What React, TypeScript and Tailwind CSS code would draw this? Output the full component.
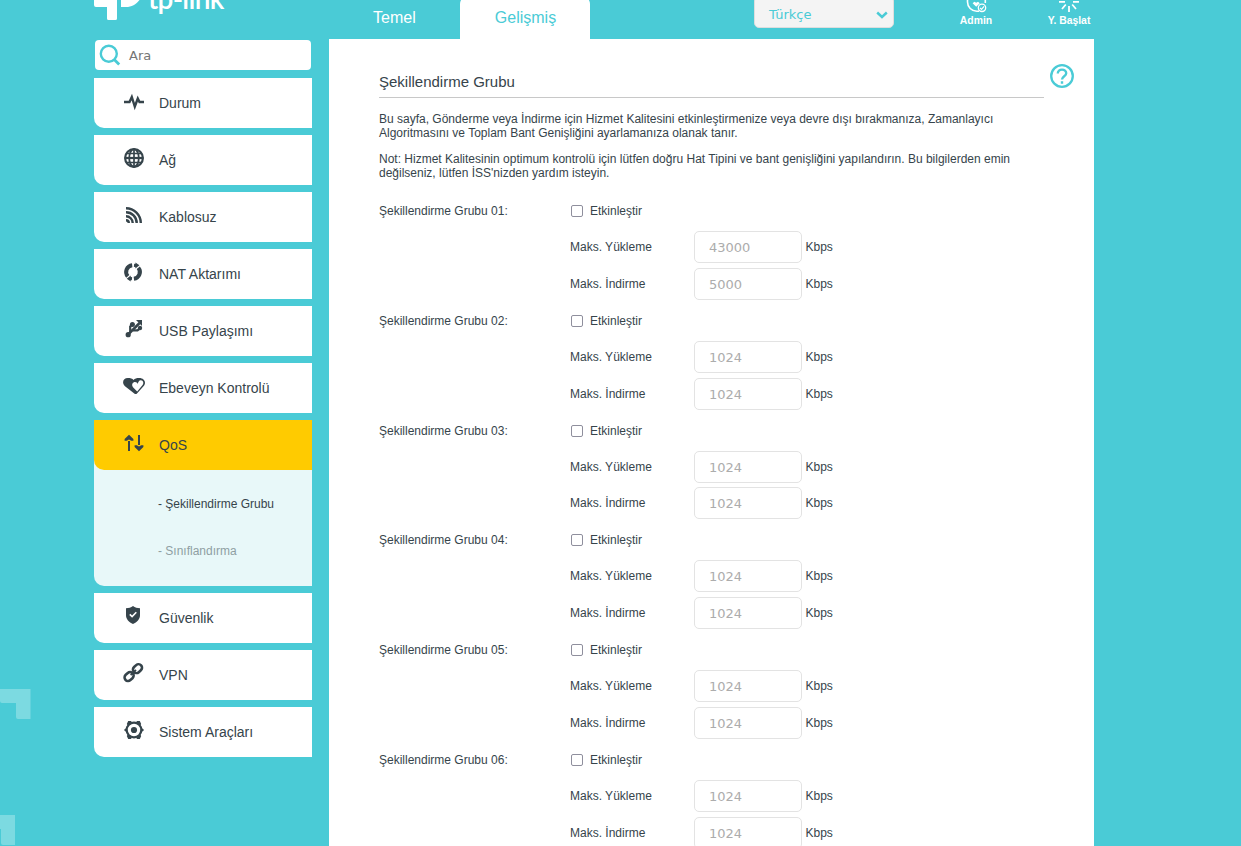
import type { ReactNode } from "react";

const GROUPS = [
  { id: "01", up: "43000", down: "5000" },
  { id: "02", up: "1024", down: "1024" },
  { id: "03", up: "1024", down: "1024" },
  { id: "04", up: "1024", down: "1024" },
  { id: "05", up: "1024", down: "1024" },
  { id: "06", up: "1024", down: "1024" },
];

// every menu icon is drawn on a 24x24 grid, at its natural size
const ICONS: Record<string, ReactNode> = {
  status: (
    <path
      d="M2 13h5.500l2.300-5 3 9.500 3-8 1.700 3.500H22"
      fill="none"
      stroke="currentColor"
      strokeWidth="2.400"
    />
  ),
  globe: (
    <g fill="none" stroke="currentColor" strokeWidth="2.200">
      <circle cx="12" cy="12" r="8.900" />
      <ellipse cx="12" cy="12" rx="4.800" ry="8.900" strokeWidth="1.800" />
      <path d="M3 12h18" />
      <path d="M12 3v18M4.400 7.500h15.200M4.400 16.500h15.200" strokeWidth="1.700" />
    </g>
  ),
  wifi: (
    <g fill="none" stroke="currentColor" strokeWidth="2.400">
      <path d="M4 5.200A14.800 14.800 0 0 1 18.800 20" />
      <path d="M4 9.300A10.700 10.700 0 0 1 14.700 20" />
      <path d="M4 13.300A6.700 6.700 0 0 1 10.700 20" />
      <path d="M4 17.200A2.800 2.800 0 0 1 6.800 20" />
    </g>
  ),
  nat: (
    <>
      <g fill="none" stroke="currentColor" strokeWidth="4">
        <path d="M5.800 16.400A6.800 6.800 0 0 1 10.200 5.200" />
        <path d="M16.300 7.700A6.800 6.800 0 0 1 11.900 18.800" />
        <path d="M12 5.200a6.800 6.800 0 0 1 2.300.7M10 18.800a6.800 6.800 0 0 1-2.300-.7" strokeWidth="3" />
      </g>
      <path d="M13.400 2.600v5.800l4-3.200zM8.700 21.400v-5.800l-4 3.200z" fill="currentColor" />
    </>
  ),
  usb: (
    <g fill="none" stroke="currentColor" strokeWidth="2.200">
      <path d="M6 17.600 17.600 6" strokeWidth="2.600" />
      <path d="M8.200 15V9.500L11 7M11 13.400h4.500l3-2.600" />
      <path d="M14 3h6v6z" fill="currentColor" stroke="none" />
      <circle cx="6.200" cy="17.700" r="2.600" fill="currentColor" stroke="none" />
      <circle cx="10.400" cy="7.400" r="2.500" fill="currentColor" stroke="none" />
      <circle cx="18" cy="11" r="2.200" fill="currentColor" stroke="none" />
    </g>
  ),
  heart: (
    <>
      <path
        d="M12.600 19.700 3 12.200C-.6 8.800 1.200 4 5.800 4 8.400 4 10.500 4.600 11.500 6c1.300-1.400 3-2 5.700-2 5.300 0 7.500 4.800 4.300 8.200l-6.300 7c-.8.9-1.700 1.200-2.600.5z"
        fill="currentColor"
      />
      <path
        d="M15.200 17.400 11 13.200c-1.500-1.900-.9-4.300.9-4.900 1.700-.6 3.300.2 3.800 1.700.4-2 1.300-3.900 3.200-3.800 2.500.2 3.200 3 1.500 5z"
        fill="#fff"
      />
    </>
  ),
  qos: (
    <g fill="currentColor">
      <path d="M6 10h2v10H6zM16 4h2v10h-2z" />
      <path d="M7 3.800 11.400 8v1.800H9.200L7 8.600 4.800 9.800H2.600V8zM17 20.200 12.600 16v-1.800h2.200l2.200 1.200 2.200-1.200h2.200V16z" />
    </g>
  ),
  shield: (
    <>
      <path
        d="M11 2c2 1.500 4.300 2.200 7 2.300v7c0 4-3 6.900-7 8.700-4-1.800-7-4.700-7-8.700v-7C6.700 4.200 9 3.500 11 2z"
        fill="currentColor"
      />
      <path d="m7.800 10.300 2.300 2.200 4.200-4.300" fill="none" stroke="#fff" strokeWidth="1.600" />
    </>
  ),
  link: (
    <g fill="none" stroke="currentColor" strokeWidth="2.600">
      <rect x="10.600" y="4.200" width="9.800" height="7" rx="3.500" transform="rotate(-42 15.400 7.700)" />
      <rect x="2.200" y="12" width="9.800" height="7" rx="3.500" transform="rotate(-42 7.100 15.500)" />
      <path d="m8.600 14 5.400-5" strokeWidth="1.800" />
    </g>
  ),
  gear: (
    <>
      <circle cx="12" cy="12" r="7.300" fill="none" stroke="currentColor" strokeWidth="2.200" />
      <g fill="currentColor">
        <circle cx="12" cy="12" r="3.100" />
        <path d="M6.200 3h3.200l-.4 2.600-3 2.200L4.800 6zM17.800 3h-3.200l.4 2.600 3 2.200L19.200 6zM6.200 21h3.200l-.4-2.600-3-2.200L4.800 18zM17.800 21h-3.200l.4-2.600 3-2.200 1.200 1.800zM5 9.200v5.600L1.900 12zM19 9.200v5.600l3.100-2.800z" />
      </g>
    </>
  ),
};

function MenuItem({ icon, label, active }: { icon: string; label: string; active?: boolean }) {
  return (
    <a
      className={`flex h-[50px] items-center rounded-bl-[10px] pl-7 text-sm ${active ? "bg-[#ffcb00]" : "bg-white"}`}
    >
      <svg viewBox="0 0 24 24" className="-mt-1 mr-[13px] size-6 text-[#36444b]">
        {ICONS[icon]}
      </svg>
      <span>{label}</span>
    </a>
  );
}

function LimitRow({ label, value, className }: { label: string; value: string; className: string }) {
  return (
    <div className={`flex items-center pl-[191px] ${className}`}>
      <span className="w-[124px]">{label}</span>
      <input
        disabled
        defaultValue={value}
        className="h-8 w-[108px] rounded-[5px] border border-[#e3e3e3] bg-white pt-px pl-3.5 font-['DejaVu_Sans'] text-[13px] text-[#acacac]"
      />
      <span className="pl-[3.500px]">Kbps</span>
    </div>
  );
}

function Header() {
  return (
    <header className="flex h-[39px] overflow-hidden pl-[94px] text-white">
      <div className="flex w-[249px] items-start">
        <svg viewBox="0 0 46 20" className="h-5 w-[46px]">
          <path
            d="M0 0h23v18.500a1.500 1.500 0 0 1-1.500 1.500h-7a1.500 1.500 0 0 1-1.500-1.500V7H2a2 2 0 0 1-2-2z"
            fill="#fff"
          />
          <path d="M27 0h18.500C42 4.600 37.500 7 32 7h-5z" fill="#fff" />
        </svg>
        <span className="-mt-[20px] ml-2 font-['Lato'] text-[28px] leading-9 font-semibold tracking-[-0.7px]">
          tp-link
        </span>
      </div>
      <div className="w-[117px] pt-1.5 pl-[30px] text-base leading-6">Temel</div>
      <div className="-mt-1 h-[43px] w-[130px] rounded-t-lg bg-white pt-2.5 pl-px text-center text-base leading-6 text-[#4acbd6]">
        Gelişmiş
      </div>
      <div className="-mt-1 ml-[164px] flex h-8 w-[140px] items-center justify-between rounded-[5px] border border-[#dedede] bg-[#f4f4f4] pt-1.5 pr-[5px] pl-3.5 font-['DejaVu_Sans'] text-[13px] text-[#4acbd6]">
        Türkçe
        <svg viewBox="0 0 12 8" className="h-2 w-3">
          <path d="m1.200 1.500 4.800 4.500 4.800-4.500" fill="none" stroke="currentColor" strokeWidth="2.400" />
        </svg>
      </div>
      <div className="ml-[52px] flex w-[60px] flex-col items-center text-[10.400px] leading-[15px] font-bold">
        <svg viewBox="0 0 24 13" className="h-[13px] w-6">
          <g fill="none" stroke="#fff" strokeWidth="1.600">
            <path d="M3.500 0v2a9.200 9.200 0 0 0 9.200 9.200H15M21.300 0v3" />
            <circle cx="18" cy="7.800" r="3.700" strokeWidth="1.300" />
            <path d="m16 7.800 1.500 1.500 2.600-3" strokeWidth="1.200" />
          </g>
          <path d="M12.200 6.800 8.600 3.200l1.800-1.400 1.800 1 1.800-1 1.800 1.400z" fill="#fff" />
        </svg>
        <span>Admin</span>
      </div>
      <div className="ml-[33px] flex w-[60px] flex-col items-center text-[10.400px] leading-[15px] font-bold">
        <svg viewBox="0 0 24 13" className="h-[13px] w-6">
          <path
            d="M2 1.800h6M16 1.800h6M12 6v6M8.800 4.500 5 9M15.200 4.500 19 9"
            stroke="#fff"
            strokeWidth="1.800"
          />
        </svg>
        <span>Y. Başlat</span>
      </div>
    </header>
  );
}

export default function App() {
  return (
    <div className="relative h-[846px] w-[1241px] overflow-hidden bg-[#4acbd6] font-['Liberation_Sans',sans-serif] text-[#36444b]">
      <svg viewBox="0 0 31 157" className="absolute top-[689px] left-0 h-[157px] w-[31px]">
        <path
          d="M0 0h30.500v30H18a2 2 0 0 1-2-2V14H2a2 2 0 0 1-2-2zM0 126h15v30H3a2 2 0 0 1-2-2v-14H0z"
          fill="#7cdae1"
        />
      </svg>
      <Header />
      <div className="flex pl-[94px]">
        <nav className="w-[218px]">
          <div className="mt-px ml-px flex h-[30px] w-[216px] items-center rounded bg-white">
            <svg viewBox="0 0 22 22" className="ml-1 size-[22px] text-[#4acbd6]">
              <g fill="none" stroke="currentColor" strokeWidth="2.400">
                <circle cx="9.800" cy="9.800" r="8" />
                <path d="m15.200 15.400 5 5" strokeWidth="2.800" />
              </g>
            </svg>
            <span className="pt-0.5 pl-2 font-['DejaVu_Sans'] text-[13px] text-[#757575]">Ara</span>
          </div>
          <div className="mt-2 flex flex-col gap-[7px]">
            <MenuItem icon="status" label="Durum" />
            <MenuItem icon="globe" label="Ağ" />
            <MenuItem icon="wifi" label="Kablosuz" />
            <MenuItem icon="nat" label="NAT Aktarımı" />
            <MenuItem icon="usb" label="USB Paylaşımı" />
            <MenuItem icon="heart" label="Ebeveyn Kontrolü" />
            <div className="h-[166px] rounded-bl-[10px] bg-[#e8f8f9] text-xs">
              <MenuItem icon="qos" label="QoS" active />
              <div className="mt-[26px] pl-16 leading-4">- Şekillendirme Grubu</div>
              <div className="mt-[31px] pl-16 leading-4 text-[#8f9fa3]">- Sınıflandırma</div>
            </div>
            <MenuItem icon="shield" label="Güvenlik" />
            <MenuItem icon="link" label="VPN" />
            <MenuItem icon="gear" label="Sistem Araçları" />
          </div>
        </nav>
        <main className="ml-[17px] h-[807px] w-[765px] overflow-hidden bg-white pl-[50px] text-xs">
          <div className="flex">
            <h1 className="h-[59px] w-[665px] border-b border-[#c8c8c8] pt-8 text-[15px] leading-[22px]">
              Şekillendirme Grubu
            </h1>
            <svg viewBox="0 0 24 24" className="mt-[25px] ml-1.5 size-6 text-[#4acbd6]">
              <g fill="none" stroke="currentColor" strokeWidth="2.300">
                <circle cx="12" cy="12" r="10.800" />
                <path d="M7.800 9.500c0-2.500 1.800-3.900 4.200-3.900s4.200 1.500 4.200 3.700c0 2.900-4.200 3-4.200 6.300" strokeWidth="2.400" />
              </g>
              <path d="M10.800 17.300h2.400v2.400h-2.400z" fill="currentColor" />
            </svg>
          </div>
          <p className="mt-3.5 leading-[14px]">
            Bu sayfa, Gönderme veya İndirme için Hizmet Kalitesini etkinleştirmenize veya devre dışı bırakmanıza, Zamanlayıcı
            <br />
            Algoritmasını ve Toplam Bant Genişliğini ayarlamanıza olanak tanır.
          </p>
          <p className="mt-3 leading-[14px]">
            Not: Hizmet Kalitesinin optimum kontrolü için lütfen doğru Hat Tipini ve bant genişliğini yapılandırın. Bu bilgilerden emin
            <br />
            değilseniz, lütfen İSS'nizden yardım isteyin.
          </p>
          <div className="mt-[13.03px]">
            {GROUPS.map((g) => (
              <section key={g.id}>
                <div className="flex h-[36.15px] items-center">
                  <span className="w-48">Şekillendirme Grubu {g.id}:</span>
                  <label className="flex items-center gap-[7px]">
                    <input
                      type="checkbox"
                      className="size-3 appearance-none rounded-[2px] border border-[#8f8f9d] bg-white"
                    />
                    Etkinleştir
                  </label>
                </div>
                <LimitRow label="Maks. Yükleme" value={g.up} className="h-[35.85px]" />
                <LimitRow label="Maks. İndirme" value={g.down} className="h-[37.75px]" />
              </section>
            ))}
          </div>
        </main>
      </div>
    </div>
  );
}
